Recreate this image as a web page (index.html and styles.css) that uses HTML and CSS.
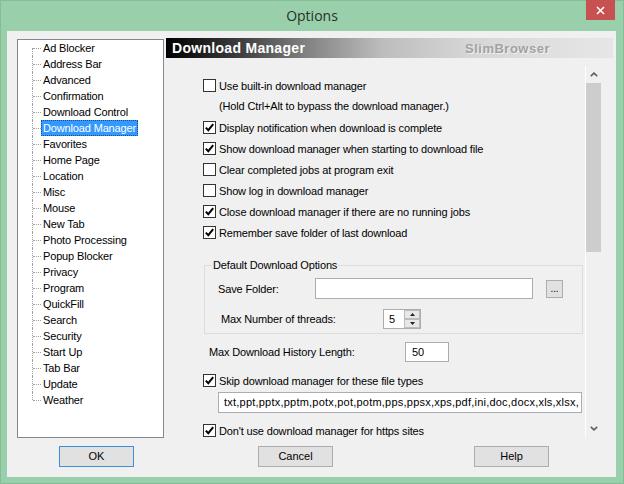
FILE: index.html
```html
<!DOCTYPE html>
<html>
<head>
<meta charset="utf-8">
<title>Options</title>
<link rel="stylesheet" href="styles.css">
</head>
<body>
<div class="window">
  <div class="titlebar">
    <span class="title">Options</span>
    <div class="close"><svg width="9" height="9" viewBox="0 0 9 9"><path d="M1 1 L8 8 M8 1 L1 8" stroke="#fff" stroke-width="1.6" fill="none"/></svg></div>
  </div>
  <div class="client">
    <div class="main">
      <div class="tree">
        <ul>
          <li><span>Ad Blocker</span></li>
          <li><span>Address Bar</span></li>
          <li><span>Advanced</span></li>
          <li><span>Confirmation</span></li>
          <li><span>Download Control</span></li>
          <li class="sel"><span>Download Manager</span></li>
          <li><span>Favorites</span></li>
          <li><span>Home Page</span></li>
          <li><span>Location</span></li>
          <li><span>Misc</span></li>
          <li><span>Mouse</span></li>
          <li><span>New Tab</span></li>
          <li><span>Photo Processing</span></li>
          <li><span>Popup Blocker</span></li>
          <li><span>Privacy</span></li>
          <li><span>Program</span></li>
          <li><span>QuickFill</span></li>
          <li><span>Search</span></li>
          <li><span>Security</span></li>
          <li><span>Start Up</span></li>
          <li><span>Tab Bar</span></li>
          <li><span>Update</span></li>
          <li><span>Weather</span></li>
        </ul>
      </div>
      <div class="panel">
        <div class="header">
          <span class="h-title">Download Manager</span>
          <span class="h-brand">SlimBrowser</span>
        </div>
        <div class="view">
          <div class="content">
            <div class="cb-row"><span class="cb"></span><span>Use built-in download manager</span></div>
            <div class="note-row">(Hold Ctrl+Alt to bypass the download manager.)</div>
            <div class="cb-row"><span class="cb on"><svg viewBox="0 0 11 11"><path d="M1.8 5.6 L4.3 8.2 L9.2 2.2"/></svg></span><span>Display notification when download is complete</span></div>
            <div class="cb-row"><span class="cb on"><svg viewBox="0 0 11 11"><path d="M1.8 5.6 L4.3 8.2 L9.2 2.2"/></svg></span><span>Show download manager when starting to download file</span></div>
            <div class="cb-row"><span class="cb"></span><span>Clear completed jobs at program exit</span></div>
            <div class="cb-row"><span class="cb"></span><span>Show log in download manager</span></div>
            <div class="cb-row"><span class="cb on"><svg viewBox="0 0 11 11"><path d="M1.8 5.6 L4.3 8.2 L9.2 2.2"/></svg></span><span>Close download manager if there are no running jobs</span></div>
            <div class="cb-row"><span class="cb on"><svg viewBox="0 0 11 11"><path d="M1.8 5.6 L4.3 8.2 L9.2 2.2"/></svg></span><span>Remember save folder of last download</span></div>

            <div class="group">
              <div class="group-title"><span>Default Download Options</span></div>
              <div class="g-row folder-row">
                <span class="lbl lbl-folder">Save Folder:</span>
                <span class="textbox folder-box"></span>
                <span class="btn-dots">...</span>
              </div>
              <div class="g-row threads-row">
                <span class="lbl lbl-threads">Max Number of threads:</span>
                <div class="spin">
                  <span class="spin-val">5</span>
                  <div class="spin-btns">
                    <div class="sb"><svg width="5" height="3" viewBox="0 0 5 3"><path d="M0 3 L2.5 0 L5 3 Z" fill="#222"/></svg></div>
                    <div class="sb"><svg width="5" height="3" viewBox="0 0 5 3"><path d="M0 0 L2.5 3 L5 0 Z" fill="#222"/></svg></div>
                  </div>
                </div>
              </div>
            </div>

            <div class="hist-row">
              <span class="lbl lbl-hist">Max Download History Length:</span>
              <span class="textbox hist-box">50</span>
            </div>

            <div class="cb-row skip-row"><span class="cb on"><svg viewBox="0 0 11 11"><path d="M1.8 5.6 L4.3 8.2 L9.2 2.2"/></svg></span><span>Skip download manager for these file types</span></div>
            <div class="textbox types-box">txt,ppt,pptx,pptm,potx,pot,potm,pps,ppsx,xps,pdf,ini,doc,docx,xls,xlsx,</div>
            <div class="cb-row https-row"><span class="cb on"><svg viewBox="0 0 11 11"><path d="M1.8 5.6 L4.3 8.2 L9.2 2.2"/></svg></span><span>Don't use download manager for https sites</span></div>
          </div>
          <div class="scrollbar">
            <div class="sc-arrow"><svg width="8" height="5" viewBox="0 0 8 5"><path d="M0.8 4.2 L4 1.2 L7.2 4.2" fill="none" stroke="#606060" stroke-width="1.6"/></svg></div>
            <div class="sc-thumb"></div>
            <div class="sc-track"></div>
            <div class="sc-arrow"><svg width="8" height="5" viewBox="0 0 8 5"><path d="M0.8 0.8 L4 3.8 L7.2 0.8" fill="none" stroke="#606060" stroke-width="1.6"/></svg></div>
          </div>
        </div>
      </div>
    </div>
    <div class="buttons">
      <span class="btn btn-default btn-ok">OK</span>
      <span class="btn btn-cancel">Cancel</span>
      <span class="btn btn-help">Help</span>
    </div>
  </div>
</div>
</body>
</html>
```
FILE: styles.css
```css
html, body {
  margin: 0;
  padding: 0;
}
body {
  width: 624px;
  height: 484px;
  overflow: hidden;
  font-family: "Liberation Sans", Arial, sans-serif;
  font-size: 11px;
  color: #000;
}
.window {
  width: 624px;
  height: 484px;
  box-sizing: border-box;
  background: #99cfaa;
  border: 1px solid #84bd96;
  display: flex;
  flex-direction: column;
}
.titlebar {
  height: 30px;
  display: grid;
  grid-template-columns: 1fr auto 1fr;
  align-items: center;
}
.title {
  grid-column: 2;
  font-family: "Open Sans", "Noto Sans", sans-serif;
  font-size: 14px;
  color: #243329;
  line-height: 30px;
}
.close {
  grid-column: 3;
  justify-self: end;
  align-self: start;
  margin-top: -1px;
  margin-right: 8px;
  width: 29px;
  height: 20px;
  background: #c75050;
  display: flex;
  align-items: center;
  justify-content: center;
}
.client {
  margin: 0 7px 6px 6px;
  height: 446px;
  background: #f0f0f0;
  box-sizing: border-box;
  padding-top: 7px;
  display: flex;
  flex-direction: column;
}
.main {
  display: flex;
  height: 400px;
}
.tree {
  margin-left: 10px;
  margin-top: 1px;
  width: 147px;
  height: 399px;
  box-sizing: border-box;
  border: 1px solid #828790;
  background: #fff;
}
.tree ul {
  list-style: none;
  margin: 0;
  padding: 0;
}
.tree li {
  position: relative;
  height: 16px;
  line-height: 16px;
  padding-left: 23px;
  white-space: nowrap;
  letter-spacing: -0.15px;
}
.tree li::before {
  content: "";
  position: absolute;
  left: 14px;
  top: 0;
  bottom: 0;
  border-left: 1px dotted #a0a0a0;
}
.tree li:first-child::before {
  top: 8px;
}
.tree li:last-child::before {
  bottom: 8px;
}
.tree li::after {
  content: "";
  position: absolute;
  left: 15px;
  top: 8px;
  width: 8px;
  border-top: 1px dotted #a0a0a0;
}
.tree li span {
  display: inline-block;
  padding: 0 2px;
  height: 16px;
}
.tree li.sel span {
  background: #3399ff;
  color: #fff;
  outline: 1px dotted #1d4f86;
  outline-offset: -1px;
}
.panel {
  margin-left: 2px;
  width: 447px;
  display: flex;
  flex-direction: column;
}
.header {
  height: 20px;
  display: flex;
  align-items: center;
  justify-content: space-between;
  background: linear-gradient(to right, #000 0%, #404040 17%, #808080 31%, #bcbcbc 48%, #d5d5d5 67%, #e2e2e2 90%, #e6e6e6 100%);
}
.h-title {
  padding-left: 6px;
  font-weight: bold;
  font-size: 14px;
  letter-spacing: 0.3px;
  color: #fff;
}
.h-brand {
  margin-right: 63px;
  font-weight: bold;
  font-size: 13px;
  letter-spacing: 0.5px;
  color: #a2a2a2;
  text-shadow: 1px 1px 0 rgba(255, 255, 255, 0.6);
}
.view {
  margin-top: 8px;
  height: 371px;
  width: 435px;
  display: flex;
  overflow: hidden;
}
.content {
  flex: 1;
  padding-left: 37px;
  padding-top: 9px;
  box-sizing: border-box;
  overflow: hidden;
}
.cb-row {
  height: 21px;
  display: flex;
  align-items: center;
  white-space: nowrap;
  letter-spacing: -0.15px;
}
.cb {
  width: 13px;
  height: 13px;
  box-sizing: border-box;
  border: 1px solid #333;
  background: #fff;
  margin-right: 3px;
  flex: none;
  display: flex;
}
.cb svg {
  width: 11px;
  height: 11px;
}
.cb svg path {
  fill: none;
  stroke: #000;
  stroke-width: 2;
}
.note-row {
  height: 21px;
  line-height: 21px;
  padding-left: 16px;
  white-space: nowrap;
  letter-spacing: -0.15px;
}
.group {
  margin-top: 22px;
  margin-left: 1px;
  width: 379px;
  box-sizing: border-box;
  border: 1px solid #dcdcdc;
  padding-bottom: 4px;
}
.group-title {
  margin-top: -8px;
  height: 15px;
  line-height: 15px;
  padding-left: 7px;
}
.group-title span {
  background: #f0f0f0;
  padding: 0 1px;
  letter-spacing: -0.15px;
}
.g-row {
  display: flex;
  align-items: center;
  white-space: nowrap;
  letter-spacing: -0.15px;
}
.folder-row {
  margin-top: 5px;
  height: 21px;
  padding-left: 13px;
}
.lbl-folder {
  width: 97px;
}
.textbox {
  box-sizing: border-box;
  border: 1px solid #abadb3;
  background: #fff;
  display: block;
}
.folder-box {
  width: 218px;
  height: 21px;
}
.btn-dots {
  margin-left: 13px;
  width: 17px;
  height: 18px;
  box-sizing: border-box;
  border: 1px solid #adadad;
  background: #e1e1e1;
  text-align: center;
  line-height: 16px;
  font-size: 10px;
}
.threads-row {
  margin-top: 10px;
  height: 20px;
  padding-left: 16px;
}
.lbl-threads {
  width: 162px;
}
.spin {
  width: 38px;
  height: 20px;
  box-sizing: border-box;
  border: 1px solid #abadb3;
  background: #fff;
  display: flex;
}
.spin-val {
  flex: 1;
  padding-left: 5px;
  line-height: 18px;
}
.spin-btns {
  width: 16px;
  display: flex;
  flex-direction: column;
}
.sb {
  flex: 1;
  box-sizing: border-box;
  border: 1px solid #bcbcbc;
  background: #e8e8e8;
  display: flex;
  align-items: center;
  justify-content: center;
}
.hist-row {
  margin-top: 8px;
  height: 20px;
  display: flex;
  align-items: center;
  padding-left: 6px;
  white-space: nowrap;
  letter-spacing: -0.15px;
}
.lbl-hist {
  width: 196px;
}
.hist-box {
  width: 44px;
  height: 20px;
  line-height: 18px;
  padding-left: 6px;
}
.skip-row {
  margin-top: 8px;
}
.types-box {
  margin-top: 1px;
  margin-left: 15px;
  width: 364px;
  height: 21px;
  line-height: 19px;
  padding-left: 5px;
  white-space: nowrap;
  overflow: hidden;
  letter-spacing: 0.22px;
}
.https-row {
  margin-top: 7px;
}
.scrollbar {
  width: 16px;
  box-sizing: border-box;
  border-left: 1px solid #fff;
  display: flex;
  flex-direction: column;
}
.sc-arrow {
  height: 17px;
  display: flex;
  align-items: center;
  justify-content: center;
}
.sc-thumb {
  height: 169px;
  background: #cdcdcd;
}
.sc-track {
  flex: 1;
}
.buttons {
  margin-top: 8px;
  height: 21px;
  display: flex;
}
.btn {
  width: 75px;
  height: 21px;
  box-sizing: border-box;
  border: 1px solid #adadad;
  background: #e1e1e1;
  text-align: center;
  line-height: 19px;
}
.btn-default {
  border-color: #3c8fd9;
}
.btn-ok {
  margin-left: 52px;
}
.btn-cancel {
  margin-left: 124px;
}
.btn-help {
  margin-left: 141px;
}
```
